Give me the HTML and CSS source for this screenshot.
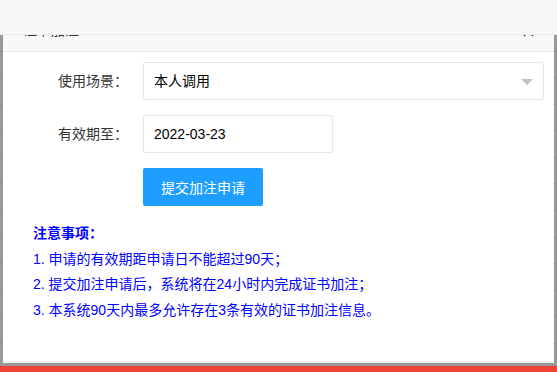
FILE: index.html
```html
<!DOCTYPE html>
<html lang="zh-CN">
<head>
    <meta charset="UTF-8">
    <meta name="viewport" content="width=device-width, initial-scale=1.0">
    <title>证书加注</title>
    <link rel="stylesheet" href="styles.css">
</head>
<body>
    <div class="topbar"></div>
    <div class="shade">
        <div class="modal">
            <div class="modal-title">
                <span>证书加注</span>
                <svg class="close" width="11" height="11" viewBox="0 0 11 11">
                    <path d="M1 1 L10 10 M10 1 L1 10" stroke="#333" stroke-width="1.3" fill="none"/>
                </svg>
            </div>
            <div class="modal-body">
                <div class="form-item">
                    <label class="form-label">使用场景：</label>
                    <div class="input-block">
                        <div class="select">
                            <span>本人调用</span>
                            <i class="edge"></i>
                        </div>
                    </div>
                </div>
                <div class="form-item">
                    <label class="form-label">有效期至：</label>
                    <div class="input-inline">
                        <input class="input" type="text" value="2022-03-23">
                    </div>
                </div>
                <div class="form-item">
                    <div class="input-block">
                        <button class="btn">提交加注申请</button>
                    </div>
                </div>
                <div class="notes">
                    <p class="notes-title">注意事项：</p>
                    <p>1. 申请的有效期距申请日不能超过90天；</p>
                    <p>2. 提交加注申请后，系统将在24小时内完成证书加注；</p>
                    <p>3. 本系统90天内最多允许存在3条有效的证书加注信息。</p>
                </div>
            </div>
        </div>
    </div>
    <div class="footer"></div>
</body>
</html>
```

FILE: styles.css
```css
* {
    box-sizing: border-box;
}
body {
    margin: 0;
    height: 372px;
    overflow: hidden;
    font-family: "Liberation Sans", "Noto Sans CJK SC", sans-serif;
    font-size: 14px;
    color: #333;
    background-color: #999;
    background-image: repeating-linear-gradient(to bottom, #8c8c8c 0, #8c8c8c 1px, transparent 1px, transparent 26.6px);
    background-position: 0 77px;
}
.topbar {
    position: fixed;
    top: 0;
    left: 0;
    right: 0;
    height: 35px;
    background-color: #f8f8f8;
    border-bottom: 1px solid #e8e8e8;
    z-index: 10;
}
.shade {
    padding: 9px 3px 0 3px;
}
.modal {
    background-color: white;
    height: 354px;
}
.modal-title {
    height: 43px;
    line-height: 42px;
    padding: 0 20px;
    background-color: #f8f8f8;
    border-bottom: 1px solid #eee;
    color: #333;
    display: flex;
    justify-content: space-between;
    align-items: center;
}
.close {
    margin-top: 2px;
}
.modal-body {
    padding: 10px 10px 0 30px;
}
.form-item {
    display: flex;
    margin-bottom: 15px;
}
.form-label {
    width: 110px;
    padding: 0 15px;
    line-height: 38px;
    text-align: right;
}
.input-block {
    flex: 1;
}
.form-item:nth-child(3) .input-block {
    margin-left: 110px;
}
.select {
    position: relative;
    height: 38px;
    line-height: 36px;
    padding-left: 10px;
    border: 1px solid #e6e6e6;
    border-radius: 2px;
    color: #000;
}
.edge {
    position: absolute;
    right: 10px;
    top: 16px;
    border-style: solid;
    border-width: 6px 6px 0 6px;
    border-color: #c2c2c2 transparent transparent transparent;
}
.input-inline {
    width: 190px;
}
.input {
    width: 190px;
    height: 38px;
    padding-left: 10px;
    border: 1px solid #e6e6e6;
    border-radius: 2px;
    font-family: inherit;
    font-size: 14px;
    color: #000;
    outline: none;
}
.btn {
    height: 38px;
    padding: 0 18px;
    border: none;
    border-radius: 2px;
    background-color: #1e9fff;
    color: white;
    font-family: inherit;
    font-size: 14px;
}
.notes {
    margin-top: 0;
    color: #0000ff;
    font-size: 14px;
    line-height: 25.5px;
}
.notes p {
    margin: 0;
}
.notes-title {
    font-weight: bold;
}
.footer {
    position: fixed;
    left: 0;
    right: 0;
    bottom: 0;
    height: 6px;
    background-color: #ef4136;
}
```
